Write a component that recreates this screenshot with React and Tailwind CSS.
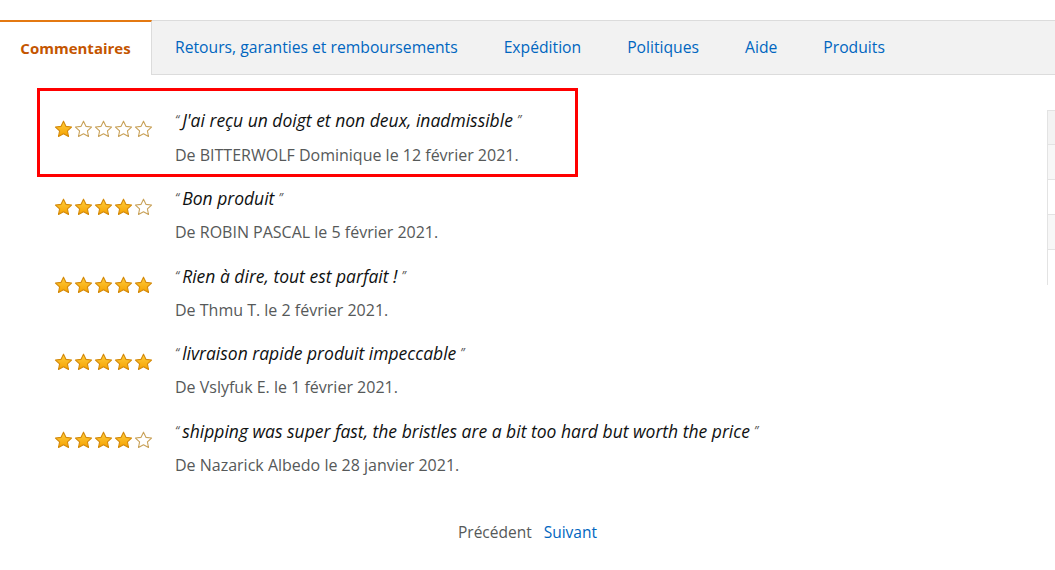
import React from 'react';

const tabs = [
  'Commentaires',
  'Retours, garanties et remboursements',
  'Expédition',
  'Politiques',
  'Aide',
  'Produits',
];

const reviews = [
  { rating: 1, title: "J'ai reçu un doigt et non deux, inadmissible", author: 'De BITTERWOLF Dominique le 12 février 2021.', highlight: true },
  { rating: 4, title: 'Bon produit', author: 'De ROBIN PASCAL le 5 février 2021.' },
  { rating: 5, title: 'Rien à dire, tout est parfait !', author: 'De Thmu T. le 2 février 2021.' },
  { rating: 5, title: 'livraison rapide produit impeccable', author: 'De Vslyfuk E. le 1 février 2021.' },
  { rating: 4, title: 'shipping was super fast, the bristles are a bit too hard but worth the price', author: 'De Nazarick Albedo le 28 janvier 2021.' },
];

const Star = ({ filled }) => (
  <svg width="19" height="18" viewBox="0 0 24 23" className="shrink-0">
    <defs>
      <linearGradient id="gold" x1="0" y1="0" x2="0" y2="1">
        <stop offset="0" stopColor="#ffce3d" />
        <stop offset="1" stopColor="#f5a100" />
      </linearGradient>
    </defs>
    <path
      d="M12 1.5l3.1 6.6 7.2.9-5.3 5 1.4 7.1L12 17.6l-6.4 3.5L7 14l-5.3-5 7.2-.9z"
      fill={filled ? 'url(#gold)' : '#ffffff'}
      stroke={filled ? '#d48a0a' : '#c9a25a'}
      strokeWidth="1.4"
      strokeLinejoin="round"
    />
  </svg>
);

const Stars = ({ rating }) => (
  <div className="flex gap-px w-[100px]">
    {[1, 2, 3, 4, 5].map((i) => (
      <Star key={i} filled={i <= rating} />
    ))}
  </div>
);

const Review = ({ review }) => (
  <div
    className={
      'flex items-start gap-[21px] ' +
      (review.highlight
        ? 'border-[3px] border-[#ff0000] w-[541px] pl-[14px] pt-[17px] pb-[9px]'
        : 'pl-[17px] pt-[9px] pb-[12.7px]')
    }
  >
    <div className="pt-[12px]">
      <Stars rating={review.rating} />
    </div>
    <div>
      <div className="text-[17.5px] italic text-[#0f1111] leading-[24px]">
        <span className="text-[12px] text-[#555] align-top mr-[3px]">“</span>
        {review.title}
        <span className="text-[12px] text-[#555] align-top ml-1">”</span>
      </div>
      <div className={'text-[16px] text-[#565959] leading-[20px] ' + (review.highlight ? 'mt-[13px]' : 'mt-[12px]')}>
        {review.author}
      </div>
    </div>
  </div>
);

export default function App() {
  return (
    <div className="w-[1055px] h-[570px] bg-white overflow-hidden" style={{ fontFamily: '"Open Sans", "Noto Sans", sans-serif' }}>
      <div className="h-5" />
      {/* Tabs */}
      <div className="flex h-[55px] bg-[#f2f2f2] border-y border-[#dcdcdc]">
        {tabs.map((t, i) =>
          i === 0 ? (
            <div
              key={t}
              className="w-[152px] -mt-px h-[55px] bg-white border-t-2 border-[#e47911] border-r border-r-[#dcdcdc] flex items-center justify-center text-[15px] font-bold text-[#c45500]"
            >
              {t}
            </div>
          ) : (
            <div key={t} className="px-[23px] flex items-center text-[15.7px] text-[#0066c0]">
              {t}
            </div>
          )
        )}
      </div>

      <div className="flex">
        <div className="flex-1 pl-[37px] pt-[13px]">
          <div className="flex flex-col">
            {reviews.map((r, i) => (
              <Review key={i} review={r} />
            ))}
          </div>
        </div>
        {/* table edge on the right */}
        <div className="w-[8px] mt-[35px] self-start border-l border-t border-[#e3e3e3]">
          <div className="h-[34px] bg-[#f3f3f3] border-b border-[#e3e3e3]" />
          <div className="h-[35px] bg-[#f7f7f7] border-b border-[#e3e3e3]" />
          <div className="h-[35px] bg-white border-b border-[#e3e3e3]" />
          <div className="h-[35px] bg-[#f7f7f7] border-b border-[#e3e3e3]" />
          <div className="h-[35px] bg-white" />
        </div>
      </div>

      {/* Pagination */}
      <div className="flex justify-center gap-3 mt-[34px] text-[15.5px] leading-[20px]">
        <span className="text-[#565959]">Précédent</span>
        <span className="text-[#0066c0]">Suivant</span>
      </div>
    </div>
  );
}
